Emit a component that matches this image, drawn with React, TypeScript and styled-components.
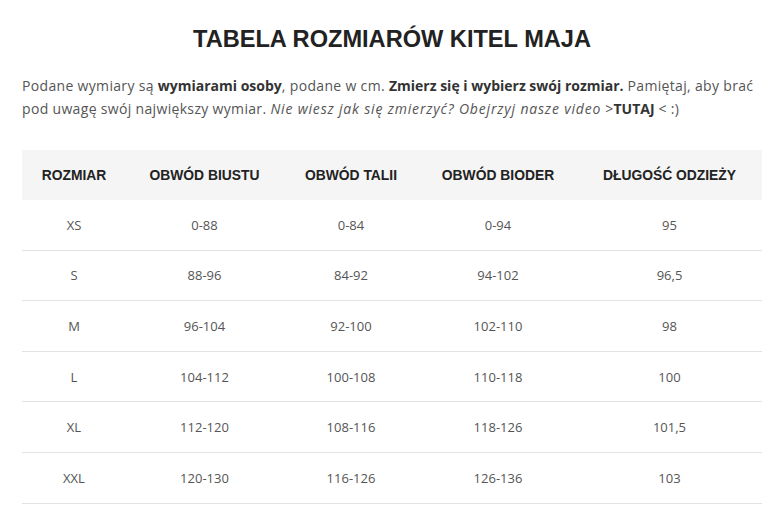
import React from "react";
import styled, { createGlobalStyle } from "styled-components";

const Global = createGlobalStyle`
  html, body { margin: 0; padding: 0; background: #fff; }
  body { font-family: "Open Sans", sans-serif; }
`;

const Page = styled.div`
  width: 772px;
  box-sizing: border-box;
  padding: 25px 10px 0 22px;
`;

const Title = styled.h1`
  margin: 0;
  text-align: center;
  font-family: "Liberation Sans", Arial, sans-serif;
  font-weight: 700;
  font-size: 23.6px;
  line-height: 29px;
  color: #222;
`;

const Intro = styled.p`
  margin: 20px 0 0 0;
  font-family: "Open Sans", sans-serif;
  font-size: 14px;
  line-height: 23px;
  letter-spacing: 0.33px;
  color: #555;
  b { color: #333; font-weight: 700; letter-spacing: 0; }
  i { font-style: italic; letter-spacing: 0.82px; }
`;

const Table = styled.table`
  margin-top: 30px;
  width: 740px;
  border-collapse: collapse;
  table-layout: fixed;
`;

const HeadCell = styled.th<{ $w: number }>`
  width: ${(p) => p.$w}px;
  height: 50px;
  padding: 0;
  background: #f5f5f5;
  font-family: "Liberation Sans", Arial, sans-serif;
  font-weight: 700;
  font-size: 13.85px;
  color: #222;
  text-align: center;
  vertical-align: middle;
`;

const Row = styled.tr`
  border-bottom: 1px solid #e2e2e2;
`;

const Cell = styled.td`
  height: 49.6px;
  padding: 0;
  text-align: center;
  vertical-align: middle;
  font-family: "Open Sans", sans-serif;
  font-size: 13px;
  color: #555;
`;

const cols: [string, number][] = [
  ["ROZMIAR", 104],
  ["OBWÓD BIUSTU", 157],
  ["OBWÓD TALII", 136],
  ["OBWÓD BIODER", 158],
  ["DŁUGOŚĆ ODZIEŻY", 185],
];

const rows = [
  ["XS", "0-88", "0-84", "0-94", "95"],
  ["S", "88-96", "84-92", "94-102", "96,5"],
  ["M", "96-104", "92-100", "102-110", "98"],
  ["L", "104-112", "100-108", "110-118", "100"],
  ["XL", "112-120", "108-116", "118-126", "101,5"],
  ["XXL", "120-130", "116-126", "126-136", "103"],
];

export default function App() {
  return (
    <Page>
      <Global />
      <Title>TABELA ROZMIARÓW KITEL MAJA</Title>
      <Intro>
        Podane wymiary są <b>wymiarami osoby</b>, podane w cm. <b>Zmierz się i wybierz swój rozmiar.</b> Pamiętaj, aby brać
        pod uwagę swój największy wymiar. <i>Nie wiesz jak się zmierzyć? Obejrzyj nasze video</i> &gt;<b>TUTAJ</b> &lt; :)
      </Intro>
      <Table>
        <thead>
          <tr>
            {cols.map(([c, w]) => (
              <HeadCell key={c} $w={w}>{c}</HeadCell>
            ))}
          </tr>
        </thead>
        <tbody>
          {rows.map((r) => (
            <Row key={r[0]}>
              {r.map((v, i) => (
                <Cell key={i}>{v}</Cell>
              ))}
            </Row>
          ))}
        </tbody>
      </Table>
    </Page>
  );
}
